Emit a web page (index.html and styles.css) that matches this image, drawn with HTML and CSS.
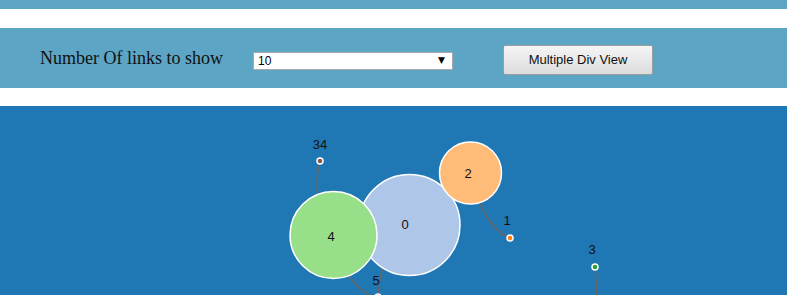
FILE: index.html
```html
<!DOCTYPE html>
<html lang="en">
<head>
    <meta charset="UTF-8">
    <title>Links Graph</title>
    <link rel="stylesheet" href="styles.css">
</head>
<body>

    <div class="top-bar"></div>

    <section class="controls">
        <label class="controls-label" for="linkCount">Number Of links to show</label>
        <div class="select-wrap">
            <select id="linkCount" class="link-select">
                <option>10</option>
                <option>20</option>
                <option>50</option>
            </select>
            <span class="select-arrow">&#9660;</span>
        </div>
        <button class="view-btn">Multiple Div View</button>
    </section>

    <section class="graph">
        <svg class="graph-svg" width="787" height="189">
            <g class="links">
                <path d="M320,55 Q310,95 333,129" />
                <path d="M470,67 Q482,120 510,132" />
                <path d="M595,161 Q597,180 597,200" />
                <path d="M333,129 Q338,172 378,195" />
                <path d="M409,119 Q378,150 378,195" />
            </g>
            <g class="nodes">
                <circle cx="409.5" cy="119" r="50.5" fill="#aec7e8" />
                <circle cx="470.5" cy="67" r="31" fill="#ffbb78" />
                <circle cx="333.5" cy="129" r="43.5" fill="#98df8a" />
                <circle class="leaf" cx="320" cy="55" r="3" fill="#8c564b" />
                <circle class="leaf" cx="510" cy="132" r="3" fill="#ff7f0e" />
                <circle class="leaf" cx="595" cy="161" r="3" fill="#2ca02c" />
                <circle class="leaf" cx="378" cy="191" r="3" fill="#9467bd" />
            </g>
            <g class="labels">
                <text x="320" y="43">34</text>
                <text x="468" y="72">2</text>
                <text x="405" y="123">0</text>
                <text x="331" y="135">4</text>
                <text x="507" y="119">1</text>
                <text x="592" y="148">3</text>
                <text x="376" y="179">5</text>
            </g>
        </svg>
    </section>

</body>
</html>
```

FILE: styles.css
```css
* {
    margin: 0;
    padding: 0;
    box-sizing: border-box;
}

body {
    background-color: white;
    overflow: hidden;
}

.top-bar {
    height: 9px;
    background: #5ca5c5;
}

.controls {
    margin-top: 19px;
    height: 60px;
    background: #5ca5c5;
    display: flex;
    align-items: center;
    padding-left: 40px;
    padding-top: 3px;
}

.controls-label {
    font-family: "Liberation Serif", serif;
    font-size: 18px;
    color: #111;
    width: 213px;
    margin-top: -2px;
}

.select-wrap {
    position: relative;
    width: 200px;
    height: 18px;
}

.link-select {
    appearance: none;
    -webkit-appearance: none;
    width: 100%;
    height: 100%;
    border: 1px solid #a9a9a9;
    background: white;
    font-family: "Liberation Sans", Arial, sans-serif;
    font-size: 12px;
    color: #000;
    padding-left: 4px;
    border-radius: 0;
    outline: none;
}

.select-arrow {
    position: absolute;
    right: 8px;
    top: 4px;
    font-family: "DejaVu Sans", sans-serif;
    font-size: 9px;
    color: #000;
    pointer-events: none;
}

.view-btn {
    margin-left: 50px;
    width: 150px;
    height: 30px;
    border: 1px solid #9c9c9c;
    border-radius: 2px;
    background: linear-gradient(#f5f5f5, #dcdcdc);
    font-family: "Liberation Sans", Arial, sans-serif;
    font-size: 13px;
    color: #111;
    cursor: pointer;
}

.graph {
    margin-top: 18px;
    height: 189px;
    background: #1f77b4;
}

.graph-svg {
    display: block;
}

.links path {
    fill: none;
    stroke: #666;
    stroke-width: 1.5px;
}

.nodes circle {
    stroke: white;
    stroke-width: 1.5px;
}

.labels text {
    font-family: "Liberation Sans", Arial, sans-serif;
    font-size: 13px;
    fill: #111;
    text-anchor: middle;
}
```
